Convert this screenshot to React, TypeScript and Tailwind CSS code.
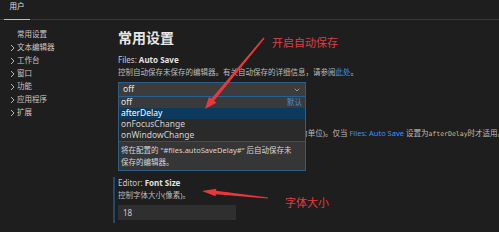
import { ChevronDown } from "lucide-react";

const FONT = '"Noto Sans", "Noto Sans CJK SC", sans-serif';

const navItems = [
  { label: "常用设置", sub: false },
  { label: "文本编辑器", sub: true },
  { label: "工作台", sub: true },
  { label: "窗口", sub: true },
  { label: "功能", sub: true },
  { label: "应用程序", sub: true },
  { label: "扩展", sub: true },
];

const autoSaveOptions = ["off", "afterDelay", "onFocusChange", "onWindowChange"];

function Chevron() {
  return (
    <svg width="5" height="8" viewBox="0 0 5 8" className="shrink-0">
      <path d="M1 1 L4 4 L1 7" fill="none" stroke="#c5c5c5" strokeWidth="0.9" />
    </svg>
  );
}

function SettingLabel({ category, name }: { category: string; name: string }) {
  return (
    <div className="text-[8px] leading-[12px] text-[#c8c8c8]">
      {category}: <span className="font-bold text-[#e2e2e2]">{name}</span>
    </div>
  );
}

export default function App() {
  return (
    <div
      className="relative w-[499px] h-[232px] overflow-hidden bg-[#1e1e1e] text-[#cccccc]"
      style={{ fontFamily: FONT }}
    >
      {/* Tabs */}
      <div className="h-[20px] border-b border-[#3a3a3a] flex items-end pl-[4px]">
        <div className="w-[26px] h-[20px] -mb-px border-b border-[#bdbdbd] flex items-center justify-center pb-[5px]">
          <span className="text-[7.5px] text-[#e0e0e0]">用户</span>
        </div>
      </div>

      <div className="flex">
        {/* Sidebar */}
        <div className="w-[113px] shrink-0 pt-[8px] pl-[10px]">
          {navItems.map((item) => (
            <div key={item.label} className="flex items-center h-[13px] text-[7.5px] text-[#c8c8c8]">
              <span className="w-[7px] flex items-center">{item.sub && <Chevron />}</span>
              {item.label}
            </div>
          ))}
        </div>

        {/* Content */}
        <div className="flex-1 min-w-0">
          <h1 className="ml-[5px] mt-[9px] mb-[7px] text-[14px] leading-[18px] font-bold text-[#e8e8e8]">
            常用设置
          </h1>

          {/* Files: Auto Save */}
          <div className="border-l-2 border-transparent pl-[3px] pb-[3px] mb-[15px]">
            <SettingLabel category="Files" name="Auto Save" />
            <div className="text-[7.5px] leading-[12px] text-[#bbbbbb] whitespace-nowrap">
              控制自动保存未保存的编辑器。有关自动保存的详细信息，请参阅
              <span className="text-[#3794ff]">此处</span>。
            </div>
            <div className="relative z-10 mt-[4px] w-[188px]">
              <div className="h-[15px] bg-[#3c3c3c] border border-[#2a5f8c] flex items-center justify-between pl-[4px] pr-[4px] text-[8.5px] text-[#e0e0e0]">
                <span>off</span>
                <ChevronDown size={8} color="#bdbdbd" />
              </div>
              <div className="absolute top-full left-0 w-full bg-[#2a2a2a] border border-t-0 border-[#2a5f8c]">
                {autoSaveOptions.map((opt) => (
                  <div
                    key={opt}
                    className={`h-[11px] flex items-center justify-between pl-[2px] pr-[3px] text-[8.5px] ${
                      opt === "off"
                        ? "bg-[#3a3a3a] text-[#e0e0e0]"
                        : opt === "afterDelay"
                        ? "bg-[#0b3a5e] text-[#ffffff]"
                        : "text-[#d0d0d0]"
                    }`}
                  >
                    <span>{opt}</span>
                    {opt === "off" && <span className="text-[7.5px] text-[#4a8fd6]">默认</span>}
                  </div>
                ))}
                <div className="border-t border-[#4a4a4a] bg-[#363636] pt-[2px] pb-[2px] pl-[2px] pr-[9px] text-[7.5px] leading-[12px] text-[#d4d4d4]">
                  将在配置的 "#files.autoSaveDelay#" 后自动保存未保存的编辑器。
                </div>
              </div>
            </div>
          </div>

          {/* Files: Auto Save Delay (under dropdown) */}
          <div className="border-l-2 border-transparent pl-[3px] pb-[3px] mb-[15px]">
            <SettingLabel category="Files" name="Auto Save Delay" />
            <div className="text-[7.5px] leading-[12px] text-[#bbbbbb] whitespace-nowrap">
              控制自动保存已更改编辑器之前经过的延迟时间(以毫秒为单位)。仅当{" "}
              <span className="text-[#3794ff]">Files: Auto Save</span> 设置为
              <span className="text-[6.5px] text-[#d7ba7d]" style={{ fontFamily: '"DejaVu Sans Mono", monospace' }}>
                afterDelay
              </span>
              时才适用。
            </div>
            <div className="mt-[4px] w-[118px] h-[15px] bg-[#2f2f2f] flex items-center pl-[5px] text-[8px] text-[#cccccc]">
              1000
            </div>
          </div>

          {/* Editor: Font Size */}
          <div className="border-l-2 border-[#1f4a6e] pl-[3px] pb-[3px]">
            <SettingLabel category="Editor" name="Font Size" />
            <div className="text-[7.5px] leading-[12px] text-[#bbbbbb]">控制字体大小(像素)。</div>
            <div className="mt-[4px] w-[118px] h-[15px] bg-[#2f2f2f] flex items-center pl-[5px] text-[8px] text-[#cccccc]">
              18
            </div>
          </div>
        </div>
      </div>

      {/* Annotations */}
      <svg className="absolute inset-0 z-20 pointer-events-none" width="499" height="232" viewBox="0 0 499 232">
        <polygon
          points="264.6,38.4 214.1,100.8 216.4,102.8 205,109 209,96.7 211.3,98.7 263.4,37.6"
          fill="#e8383d"
        />
        <polygon
          points="268.05,197.5 216.06,190.8 216.3,188.8 202,191 215.5,196.2 215.74,194.2 267.95,198.5"
          fill="#e8383d"
        />
      </svg>
      <span className="absolute z-20 left-[272px] top-[35px] text-[11px] leading-[16px] text-[#e03c3f]">
        开启自动保存
      </span>
      <span className="absolute z-20 left-[285px] top-[195px] text-[11px] leading-[16px] text-[#e03c3f]">
        字体大小
      </span>
    </div>
  );
}
